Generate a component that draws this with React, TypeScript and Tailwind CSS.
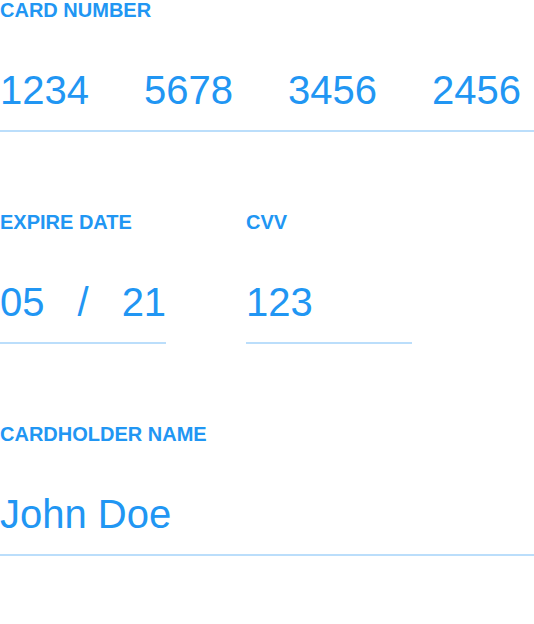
import React from 'react';

const Label = ({ children }: { children: React.ReactNode }) => (
  <div className="text-[20px] leading-5 font-bold text-[#2196f3] uppercase">{children}</div>
);

const Value = ({ children }: { children: React.ReactNode }) => (
  <div className="mt-[50px] pb-5 border-b-2 border-[#bbdefb] text-[40px] leading-10 text-[#2196f3] whitespace-nowrap">
    {children}
  </div>
);

export default function App() {
  const groups = ['1234', '5678', '3456', '2456'];

  return (
    <div className="w-[534px] h-[624px] bg-white font-['Liberation_Sans',Arial,sans-serif] overflow-hidden">
      <div className="mb-20">
        <Label>Card Number</Label>
        <Value>
          <div className="flex gap-[55px]">
            {groups.map((g) => (
              <span key={g}>{g}</span>
            ))}
          </div>
        </Value>
      </div>

      <div className="mb-20 grid grid-cols-[166px_166px] gap-x-20">
        <div>
          <Label>Expire Date</Label>
          <Value>
            <div className="flex gap-[33px]">
              <span>05</span>
              <span>/</span>
              <span>21</span>
            </div>
          </Value>
        </div>
        <div>
          <Label>CVV</Label>
          <Value>123</Value>
        </div>
      </div>

      <div>
        <Label>Cardholder Name</Label>
        <Value>John Doe</Value>
      </div>
    </div>
  );
}
